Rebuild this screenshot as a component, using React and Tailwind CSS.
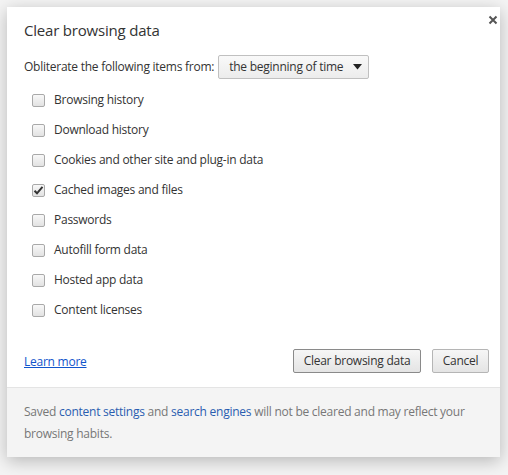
import React from 'react'

const items = [
  { label: 'Browsing history', checked: false },
  { label: 'Download history', checked: false },
  { label: 'Cookies and other site and plug-in data', checked: false },
  { label: 'Cached images and files', checked: true },
  { label: 'Passwords', checked: false },
  { label: 'Autofill form data', checked: false },
  { label: 'Hosted app data', checked: false },
  { label: 'Content licenses', checked: false },
]

function Check({ checked }) {
  return (
    <span className="w-[13px] h-[13px] rounded-[2px] border border-[#a9a9a9] bg-gradient-to-b from-[#f8f8f8] to-[#e2e2e2] flex items-center justify-center shrink-0">
      {checked && (
        <svg width="11" height="11" viewBox="0 0 11 11">
          <path d="M1.5 5.8 L4 8.3 L9.5 1.8" fill="none" stroke="#333" strokeWidth="2" />
        </svg>
      )}
    </span>
  )
}

export default function App() {
  return (
    <div className="w-[508px] h-[475px] bg-[#f4f4f4] pt-[7px] pl-[7px] font-['Open_Sans',sans-serif] text-[12px] tracking-[-0.25px] text-[#333]">
      <div className="w-[493px] bg-white shadow-[0_4px_16px_rgba(0,0,0,0.25)] flex flex-col">
        {/* Header */}
        <div className="flex justify-between items-start pl-[17px] pr-[2px] pt-[12px]">
          <h1 className="text-[15px] leading-[22px] tracking-[-0.2px] text-[#333]">Clear browsing data</h1>
          <svg width="10" height="10" viewBox="0 0 10 10" className="mt-[-4px]">
            <path d="M1.5 1.5 L8.5 8.5 M8.5 1.5 L1.5 8.5" stroke="#555" strokeWidth="2" />
          </svg>
        </div>

        {/* Time range */}
        <div className="flex items-center pl-[17px] mt-[14px] gap-[4px]">
          <span>Obliterate the following items from:</span>
          <div className="w-[151px] h-[24px] border border-[#c0c0c0] rounded-[2px] bg-gradient-to-b from-[#f9f9f9] to-[#ececec] flex items-center justify-between pl-[10px] pr-[6px]">
            <span className="text-[#333] whitespace-nowrap">the beginning of time</span>
            <svg width="9" height="6" viewBox="0 0 9 6">
              <path d="M0 0 L9 0 L4.5 5.5 Z" fill="#222" />
            </svg>
          </div>
        </div>

        {/* Checkbox list */}
        <div className="flex flex-col pl-[25px] mt-[6px]">
          {items.map((it) => (
            <label key={it.label} className="flex items-center h-[30px] gap-[9px]">
              <Check checked={it.checked} />
              <span>{it.label}</span>
            </label>
          ))}
        </div>

        {/* Actions */}
        <div className="flex items-center justify-between pl-[17px] pr-[11px] mt-[24px] mb-[14px]">
          <a className="text-[#1155cc] underline mt-[2px]">Learn more</a>
          <div className="flex gap-[11px]">
            <button className="h-[24px] w-[128px] whitespace-nowrap border border-[#8a8a8a] rounded-[2px] bg-gradient-to-b from-[#f6f6f6] to-[#e4e4e4] text-[#333]">
              Clear browsing data
            </button>
            <button className="h-[24px] w-[57px] border border-[#b5b5b5] rounded-[2px] bg-gradient-to-b from-[#f6f6f6] to-[#e4e4e4] text-[#333]">
              Cancel
            </button>
          </div>
        </div>

        {/* Footer */}
        <div className="bg-[#f4f4f4] border-t border-[#e4e4e4] pl-[17px] pr-[12px] pt-[13px] pb-[12px] leading-[22px] text-[#777]">
          Saved <span className="text-[#2a5db0]">content settings</span> and{' '}
          <span className="text-[#2a5db0]">search engines</span> will not be cleared and may reflect your
          browsing habits.
        </div>
      </div>
    </div>
  )
}
